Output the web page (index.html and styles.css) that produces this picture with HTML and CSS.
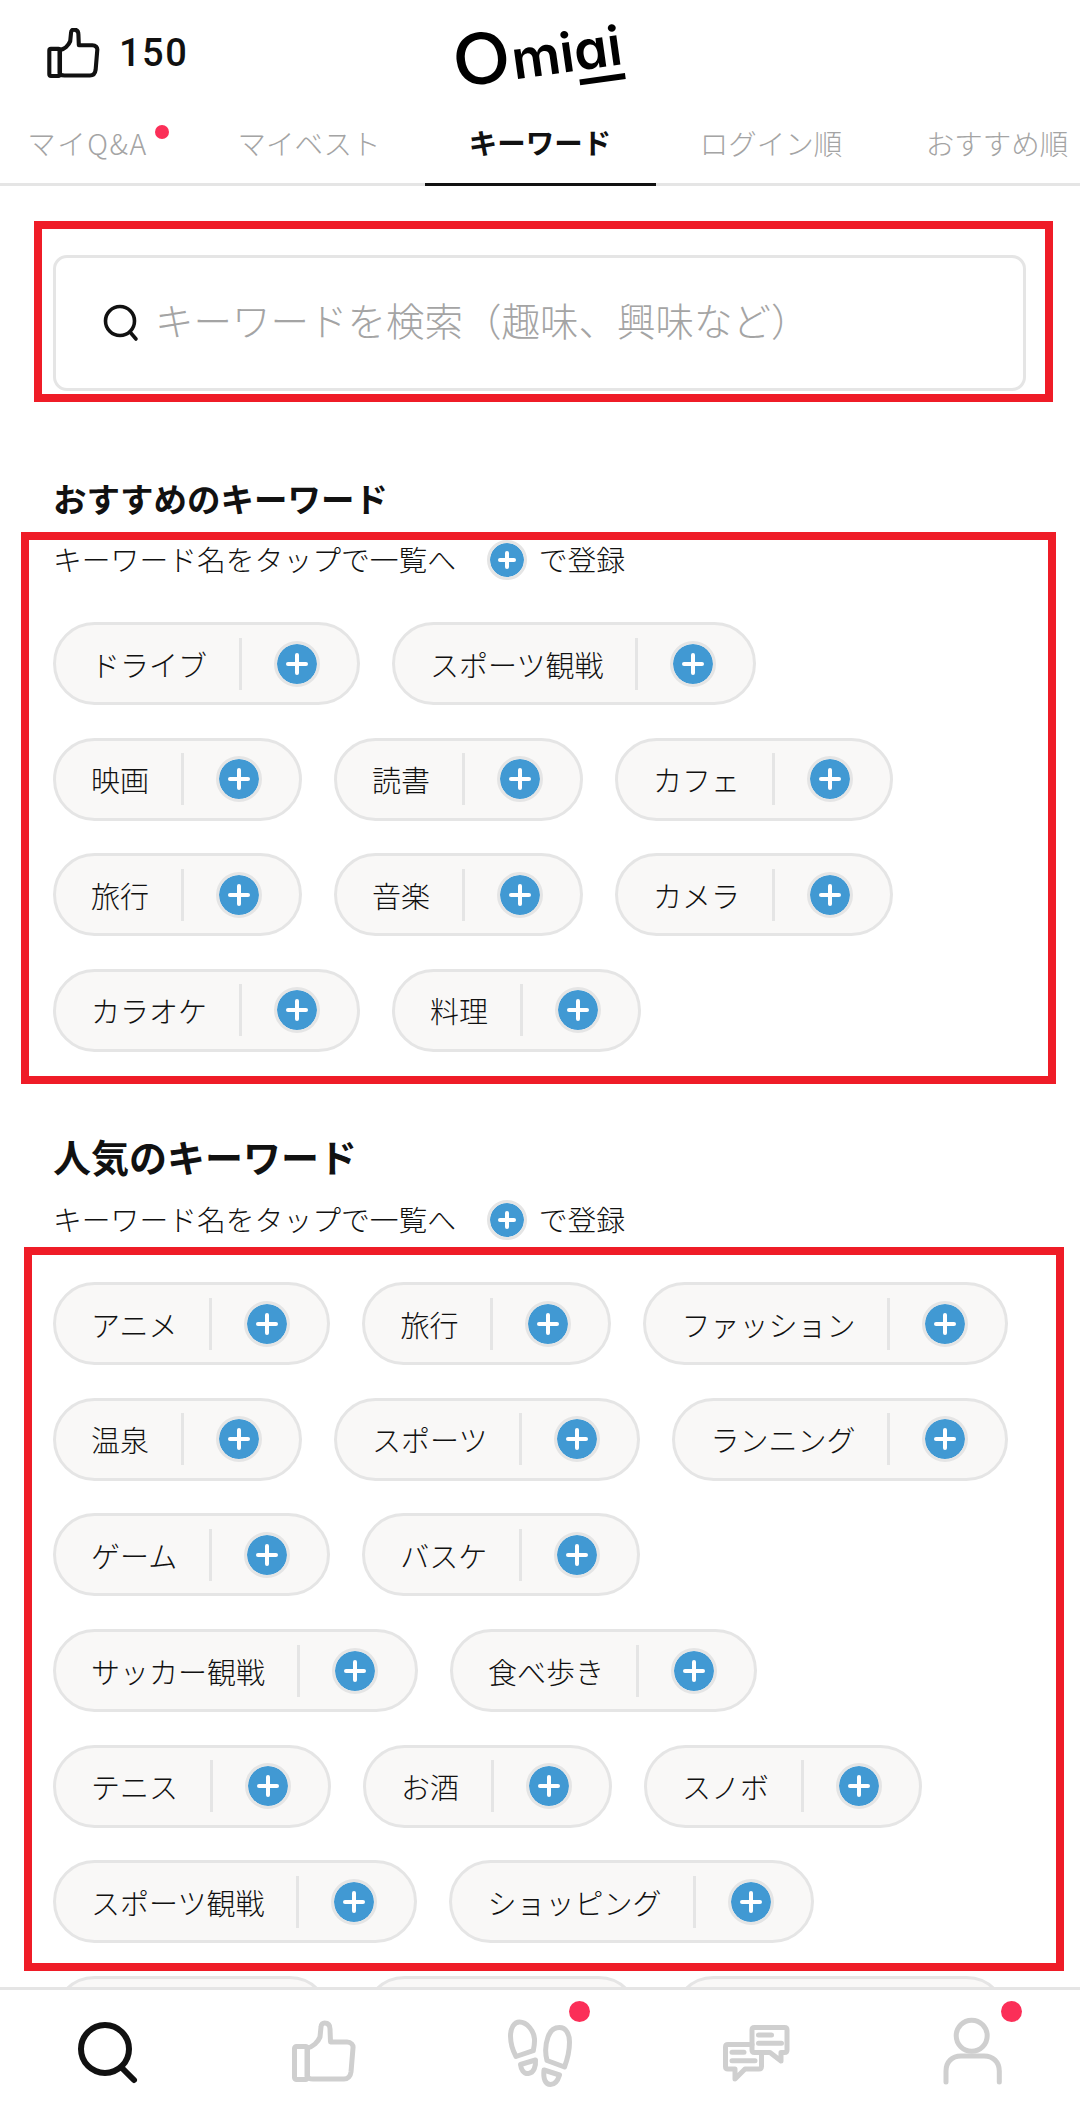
FILE: index.html
```html
<!DOCTYPE html>
<html lang="ja">
<head>
  <meta charset="UTF-8" />
  <title>Omiai キーワード</title>
  <link rel="stylesheet" href="styles.css">
</head>
<body>
  <header class="top-bar">
    <div class="likes">
      <svg class="like-icon" viewBox="1 1 64 61"><rect x="3.5" y="26.5" width="13" height="33" rx="2"/><path d="M16 28C22 27 27 22 29 17L30 7C30 4 32 3 33.5 3C37 3 39 5 39 9L39.5 22L56 22C60 22 62.5 25 62 28L60 52C59.5 56 57 59 53 59L22 59C19 59 16 58 16 56Z"/></svg>
      <span class="like-count">150</span>
    </div>
    <div class="logo"><span class="logo-o">O</span>mi<span class="logo-ai">ai</span></div>
  </header>

  <nav class="tabs">
    <a class="tab tab-first">マイQ&amp;A<i class="tab-dot"></i></a>
    <a class="tab">マイベスト</a>
    <a class="tab active">キーワード</a>
    <a class="tab">ログイン順</a>
    <a class="tab tab-last">おすすめ順</a>
  </nav>

  <main class="content">
    <div class="search-box">
      <svg class="search-icon" viewBox="0 0 36 38"><circle cx="17" cy="17" r="14.5"/><path d="M27 28L33 35"/></svg>
      <input type="text" placeholder="キーワードを検索（趣味、興味など）" />
    </div>

    <h2 class="section-title small">おすすめのキーワード</h2>
    <p class="hint">キーワード名をタップで一覧へ<span class="plus plus-small"></span>で登録</p>
    <div class="keywords">
      <div class="pill"><span class="name">ドライブ</span><span class="plus"></span></div>
      <div class="pill"><span class="name">スポーツ観戦</span><span class="plus"></span></div>
      <div class="pill"><span class="name">映画</span><span class="plus"></span></div>
      <div class="pill"><span class="name">読書</span><span class="plus"></span></div>
      <div class="pill"><span class="name">カフェ</span><span class="plus"></span></div>
      <div class="pill"><span class="name">旅行</span><span class="plus"></span></div>
      <div class="pill"><span class="name">音楽</span><span class="plus"></span></div>
      <div class="pill"><span class="name">カメラ</span><span class="plus"></span></div>
      <div class="pill"><span class="name">カラオケ</span><span class="plus"></span></div>
      <div class="pill"><span class="name">料理</span><span class="plus"></span></div>
    </div>

    <h2 class="section-title">人気のキーワード</h2>
    <p class="hint">キーワード名をタップで一覧へ<span class="plus plus-small"></span>で登録</p>
    <div class="keywords">
      <div class="pill"><span class="name">アニメ</span><span class="plus"></span></div>
      <div class="pill"><span class="name">旅行</span><span class="plus"></span></div>
      <div class="pill"><span class="name">ファッション</span><span class="plus"></span></div>
      <div class="pill"><span class="name">温泉</span><span class="plus"></span></div>
      <div class="pill"><span class="name">スポーツ</span><span class="plus"></span></div>
      <div class="pill"><span class="name">ランニング</span><span class="plus"></span></div>
      <div class="pill"><span class="name">ゲーム</span><span class="plus"></span></div>
      <div class="pill"><span class="name">バスケ</span><span class="plus"></span></div>
      <div class="pill"><span class="name">サッカー観戦</span><span class="plus"></span></div>
      <div class="pill"><span class="name">食べ歩き</span><span class="plus"></span></div>
      <div class="pill"><span class="name">テニス</span><span class="plus"></span></div>
      <div class="pill"><span class="name">お酒</span><span class="plus"></span></div>
      <div class="pill"><span class="name">スノボ</span><span class="plus"></span></div>
      <div class="pill"><span class="name">スポーツ観戦</span><span class="plus"></span></div>
      <div class="pill"><span class="name">ショッピング</span><span class="plus"></span></div>
      <div class="pill"><span class="name">ゴルフ</span><span class="plus"></span></div>
      <div class="pill"><span class="name">ダンス</span><span class="plus"></span></div>
      <div class="pill"><span class="name">アウトドア</span><span class="plus"></span></div>
    </div>
  </main>

  <!-- red annotation frames that sit over the screenshot -->
  <div class="mark mark-search"></div>
  <div class="mark mark-recommended"></div>
  <div class="mark mark-popular"></div>

  <footer class="bottom-nav">
    <div class="nav-item">
      <svg class="nav-icon current" viewBox="0 0 72 72"><circle cx="33" cy="32" r="24"/><path d="M51 52L62 63"/></svg>
    </div>
    <div class="nav-item">
      <svg class="nav-icon" viewBox="-3 -3 72 72"><rect x="3.5" y="26.5" width="13" height="33" rx="2"/><path d="M16 28C22 27 27 22 29 17L30 7C30 4 32 3 33.5 3C37 3 39 5 39 9L39.5 22L56 22C60 22 62.5 25 62 28L60 52C59.5 56 57 59 53 59L22 59C19 59 16 58 16 56Z"/></svg>
    </div>
    <div class="nav-item">
      <svg class="nav-icon" viewBox="-3 -2 72 72">
        <path d="M9 37.5C5 30 3.5 24 3.5 17C3.5 9 7 3 12.5 3C20 3 27 12 27.5 20C27.8 24 27 28 26.3 31.7Z"/>
        <path d="M13.5 45.5L28.5 41C29 47 27 54 21.5 54.5C16.5 55 14 50 13.5 45.5Z"/>
        <path d="M40 41.5C38 34 38.5 25 41 18C43 12 47 8.5 52.5 8.5C59 8.5 62.5 15 62.5 23C62.5 32 60.5 40 57.5 48Z"/>
        <path d="M37 51L52.5 56C51 61 48 65.5 43.5 65.5C38.5 65.5 36 60 37 51Z"/>
      </svg>
      <i class="nav-dot"></i>
    </div>
    <div class="nav-item">
      <svg class="nav-icon" viewBox="0 -5 72 72">
        <path d="M32 22.5H8Q5.5 22.5 5.5 25V44.5Q5.5 47 8 47H15V57L25 47H39Q41.5 47 41.5 44.5V31"/>
        <path d="M34.5 5.5H64.5Q67 5.5 67 8V28Q67 30.5 64.5 30.5H61V39L50 30.5H34.5Q32 30.5 32 28V8Q32 5.5 34.5 5.5Z"/>
        <path d="M12 30.3H24M12 38.7H35M38.5 13H51.5M38.5 21.3H61.5"/>
      </svg>
    </div>
    <div class="nav-item">
      <svg class="nav-icon" viewBox="-4 0 72 72">
        <circle cx="31.7" cy="18.7" r="15.5"/>
        <path d="M6 65V54C6 45 12 39 21 39H44C53 39 59.3 45 59.3 54V65"/>
      </svg>
      <i class="nav-dot"></i>
    </div>
  </footer>
</body>
</html>
```

FILE: styles.css
```css
:root {
  --ink: #111;
  --muted: #a4a4a4;
  --line: #e5e5e5;
  --pill-bg: #f9f8f7;
  --blue: #4199d3;
  --dot: #fb2f58;
  --red: #ef1c27;
  --icon-off: #cfcfcf;
}
* {
  box-sizing: border-box;
}
html, body {
  margin: 0;
  height: 2116px;
  overflow: hidden;
}
body {
  position: relative;
  width: 1080px;
  background: #fff;
  color: var(--ink);
  font-family: "Noto Sans CJK JP", "Noto Sans", sans-serif;
  font-weight: 300;
}

/* header */
.top-bar {
  display: grid;
  grid-template-columns: 1fr auto 1fr;
  align-items: center;
  height: 100px;
}
.likes {
  display: flex;
  align-items: center;
  gap: 19px;
  padding: 6px 0 0 47px;
}
.like-icon {
  width: 53px;
  height: 50px;
  fill: none;
  stroke: #111;
  stroke-width: 5;
  stroke-linejoin: round;
}
.like-count {
  font-family: Roboto, sans-serif;
  font-size: 38px;
  font-weight: 500;
  letter-spacing: 1.5px;
  color: #111;
}
.logo {
  width: 166px;
  height: 66px;
  margin: 2px 0 0 -6px;
  font-family: Inter, sans-serif;
  font-size: 54px;
  font-weight: 600;
  line-height: 66px;
  color: #000;
  white-space: nowrap;
  font-feature-settings: "cv11";
  transform: rotate(-8deg);
}
.logo-o {
  display: inline-block;
  font-size: 70px;
  font-weight: 500;
  margin-right: 3px;
  transform: scaleX(1.08);
}
.logo-ai {
  position: relative;
  display: inline-block;
  line-height: 50px;
}
.logo-ai::after {
  content: "";
  position: absolute;
  left: 2px;
  right: 0;
  bottom: -9px;
  height: 6px;
  background: #000;
}

/* tabs */
.tabs {
  display: flex;
  height: 86px;
  margin-left: -37.5px;
  width: 1155px;
  border-bottom: 3px solid var(--line);
}
.tab {
  position: relative;
  flex: 0 0 231px;
  height: 86px;
  padding-bottom: 1px;
  display: flex;
  align-items: center;
  justify-content: center;
  font-size: 28.5px;
  color: var(--muted);
}
.tab-first {
  padding-left: 19px;
  letter-spacing: 1.5px;
}
.tab-last {
  padding-right: 10px;
}
.tab-dot {
  position: absolute;
  left: 192px;
  top: 25px;
  width: 14px;
  height: 14px;
  border-radius: 50%;
  background: var(--dot);
}
.tab.active {
  color: #111;
  font-weight: 700;
  border-bottom: 3px solid #111;
}

/* search */
.content {
  padding: 69px 60px 0 53px;
}
.search-box {
  display: flex;
  align-items: center;
  gap: 16px;
  width: 973px;
  height: 136px;
  padding-left: 47px;
  border: 3px solid var(--line);
  border-radius: 14px;
}
.search-icon {
  flex: none;
  width: 36px;
  height: 38px;
  fill: none;
  stroke: #111;
  stroke-width: 3.6;
  stroke-linecap: round;
}
.search-box input {
  flex: 1;
  border: none;
  outline: none;
  padding: 0 0 8px;
  background: none;
  font: inherit;
  font-size: 38.5px;
}
.search-box input::placeholder {
  color: var(--muted);
  opacity: 1;
}

/* sections */
.section-title {
  margin: 82.5px 0 20px;
  font-size: 38px;
  font-weight: 700;
  line-height: 44px;
  color: #111;
}
.section-title.small {
  margin: 85px 0 18px;
  font-size: 33.5px;
}
.hint {
  display: flex;
  align-items: center;
  margin: 0 0 42px;
  font-size: 28.8px;
  line-height: 40px;
}
.keywords {
  display: flex;
  flex-wrap: wrap;
  gap: 32.6px 32px;
}
.pill {
  display: flex;
  align-items: center;
  height: 83px;
  padding: 0 37px 0 35px;
  border: 3px solid var(--line);
  border-radius: 42px;
  background: var(--pill-bg);
  font-size: 29px;
}
.name {
  padding-right: 32px;
  margin-right: 32px;
  line-height: 52px;
  border-right: 3px solid var(--line);
  box-sizing: content-box;
}

/* plus button */
.plus {
  position: relative;
  flex: none;
  width: 46px;
  height: 46px;
  border: 3px solid var(--line);
  border-radius: 50%;
  background: var(--blue);
  background-clip: padding-box;
}
.plus::before,
.plus::after {
  content: "";
  position: absolute;
  left: 50%;
  top: 50%;
  background: #fff;
  border-radius: 2px;
}
.plus::before {
  width: 22px;
  height: 4px;
  margin: -2px 0 0 -11px;
}
.plus::after {
  width: 4px;
  height: 22px;
  margin: -11px 0 0 -2px;
}
.plus-small {
  width: 40px;
  height: 40px;
  margin: 2px 11.5px 0 31px;
}
.plus-small::before {
  width: 18px;
  margin: -2px 0 0 -9px;
}
.plus-small::after {
  height: 18px;
  margin: -9px 0 0 -2px;
}

/* annotation frames */
.mark {
  position: absolute;
  border: 8px solid var(--red);
}
.mark-search {
  left: 34px;
  top: 221px;
  width: 1019px;
  height: 181px;
}
.mark-recommended {
  left: 21px;
  top: 532px;
  width: 1035px;
  height: 552px;
}
.mark-popular {
  left: 24px;
  top: 1247px;
  width: 1040px;
  height: 724px;
}

/* bottom navigation */
.bottom-nav {
  position: absolute;
  left: 0;
  right: 0;
  bottom: 0;
  display: flex;
  height: 129px;
  padding-top: 27px;
  border-top: 3px solid var(--line);
  background: #fff;
}
.nav-item {
  position: relative;
  flex: 1;
  display: flex;
  justify-content: center;
}
.nav-icon {
  width: 72px;
  height: 72px;
  fill: none;
  stroke: var(--icon-off);
  stroke-width: 5;
  stroke-linecap: round;
  stroke-linejoin: round;
}
.nav-icon.current {
  stroke: #111;
  stroke-width: 6;
}
.nav-dot {
  position: absolute;
  left: 137px;
  top: -16px;
  width: 21px;
  height: 21px;
  border-radius: 50%;
  background: var(--dot);
}
```
